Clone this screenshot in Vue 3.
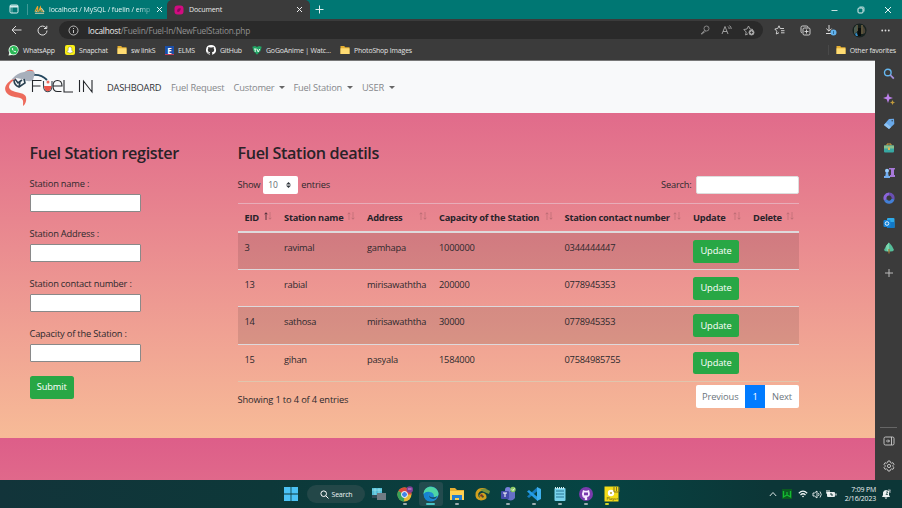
<script setup>
const bookmarks = [
  { name: 'WhatsApp', icon: 'whatsapp', w: 57 },
  { name: 'Snapchat', icon: 'snapchat', w: 52 },
  { name: 'sw linkS', icon: 'folder', w: 48 },
  { name: 'ELMS', icon: 'elms', w: 41 },
  { name: 'GitHub', icon: 'github', w: 46 },
  { name: 'GoGoAnime | Watc...', icon: 'gogo', w: 88 },
  { name: 'PhotoShop Images', icon: 'folder', w: 90 }
]
const nav = [
  { name: 'DASHBOARD', w: 64, active: true },
  { name: 'Fuel Request', w: 62.5 },
  { name: 'Customer', w: 60, drop: true },
  { name: 'Fuel Station', w: 68.5, drop: true },
  { name: 'USER', w: 40, drop: true }
]
const fields = ['Station name :', 'Station Address :', 'Station contact number :', 'Capacity of the Station :']
const headers = ['EID', 'Station name', 'Address', 'Capacity of the Station', 'Station contact number', 'Update', 'Delete']
const rows = [
  ['3', 'ravimal', 'gamhapa', '1000000', '0344444447'],
  ['13', 'rabial', 'mirisawaththa', '200000', '0778945353'],
  ['14', 'sathosa', 'mirisawaththa', '30000', '0778945353'],
  ['15', 'gihan', 'pasyala', '1584000', '07584985755']
]
</script>

<template>
  <div class="screen">
    <header class="tabs">
      <div class="tab-menu">
        <svg width="10" height="10" viewBox="0 0 10 10" fill="none" stroke="#d9eeee"><rect x="1" y="1" width="8" height="8" rx="1.2" /><path d="M1 2.5h8" stroke-width="2" /><path d="M3 3v6" stroke-width=".5" /></svg>
      </div>
      <div class="tab back-tab">
        <svg width="11" height="10" viewBox="0 0 12 10"><path d="M1 7L4 1v6M5 7l2-5 1 5M9 6l2 1" stroke="#f0a52d" stroke-width="1.2" fill="none" /><path d="M1 8.5h10M2 6l1 1M8 3l3 4" stroke="#d8d0ad" stroke-width="1.1" /></svg>
        <span class="tab-title">localhost / MySQL / fuelin / emp</span>
        <svg class="close" width="7" height="7" viewBox="0 0 7 7" stroke="#e3f2f2"><path d="M1 1l5 5M6 1L1 6" /></svg>
      </div>
      <div class="tab front-tab">
        <svg width="10" height="10" viewBox="0 0 10 10"><rect x=".5" y=".5" width="9" height="9" rx="3" fill="#d20c80" /><path d="M3 6.5c0-3 2-4 4-3-1 3-2 4-4 3z" fill="#8d075d" /></svg>
        <span class="tab-title doc">Document</span>
        <svg class="close" width="7" height="7" viewBox="0 0 7 7" stroke="#eee"><path d="M1 1l5 5M6 1L1 6" /></svg>
      </div>
      <svg class="plus" width="9" height="9" viewBox="0 0 9 9" stroke="#dceeee"><path d="M4.500 .5v8M.5 4.500h8" /></svg>
      <div class="window-buttons">
        <svg width="7" height="8" viewBox="0 0 7 8" stroke="#c8e2e1"><path d="M.5 4.500h6" /></svg>
        <svg width="8" height="8" viewBox="0 0 8 8" stroke="#e3f2f2" fill="none"><rect x="1" y="2" width="5" height="5" rx="1" /><path d="M2.500 1H6q1 0 1 1v3.500" stroke-width=".8" /></svg>
        <svg width="8" height="8" viewBox="0 0 8 8" stroke="#e8f5f5"><path d="M1 1l6 6M7 1L1 7" /></svg>
      </div>
    </header>

    <div class="toolbar">
      <svg class="back" width="11" height="10" viewBox="0 0 11 10" fill="none" stroke="#ddd"><path d="M10.500 5H1M5 1L1 5l4 4" /></svg>
      <svg class="reload" width="11" height="11" viewBox="0 0 11 11" fill="none" stroke="#ddd"><path d="M9.200 3A4.500 4.500 0 1 0 10 5.500M9.800 .8v2.700H7" /></svg>
      <div class="address">
        <svg width="11" height="11" viewBox="0 0 11 11" fill="none" stroke="#c4c4c4"><circle cx="5.500" cy="5.500" r="4.500" stroke-width=".9" /><path d="M5.500 5v3M5.500 3v1" /></svg>
        <span class="url"><b>localhost</b>/Fuelin/Fuel-In/NewFuelStation.php</span>
        <div class="address-icons">
          <svg width="10" height="10" viewBox="0 0 10 10" fill="none" stroke="#8d8d8d" stroke-width=".9"><circle cx="6.500" cy="3.500" r="2.500" /><path d="M4.700 5.200L1 9l2-.4V7.500h1.200L5.500 6M7 3h.3" /></svg>
          <svg width="11" height="10" viewBox="0 0 11 10" fill="none" stroke="#a8a8a8" stroke-width=".9"><path d="M1 9l3-7.500L7 9M2 6.500h4M7 1.500q1.300 1 1.200 2.500M8.500 .5q1.800 1.500 1.700 3.500" /></svg>
          <svg width="12" height="11" viewBox="0 0 12 11" fill="none" stroke="#aaa" stroke-width=".9"><path d="M10 4.500L7 4 5.500 1 4 4 .8 4.500 3.200 7 2.600 10 5 8.800" /><circle cx="8.500" cy="7.500" r="2.500" fill="#aaa" /><path d="M7.200 7.500h2.600M8.500 6.200v2.600" stroke="#333" /></svg>
        </div>
      </div>
      <div class="tool-icons">
        <svg width="11" height="10" viewBox="0 0 11 10" fill="none" stroke="#ddd" stroke-width=".9"><path d="M10 3.500H6.200L5 .8 3.700 3.500 .8 4l2 2.200L2.300 9 5 7.700M7 5.700h3.500M7 7.800h3.500" /></svg>
        <svg width="11" height="11" viewBox="0 0 11 11" fill="none" stroke="#ddd" stroke-width=".9"><rect x="3" y="3" width="7" height="7" rx="1.300" /><path d="M6.500 4.500v4M4.500 6.500h4M2 8Q1 7.500 1 6.500V2.500Q1 1 2.500 1h4Q8 1 8 2.500" /></svg>
        <svg width="12" height="12" viewBox="0 0 12 12" fill="none" stroke="#ddd"><path d="M4 1v6M1.300 4.600L4 7.200l2.600-2.600M1 9.500h5" /><circle cx="8.500" cy="8.500" r="3" fill="#62b2ed" stroke="none" /><path d="M8.500 7v3" stroke="#326f9b" /></svg>
        <svg class="avatar" width="15" height="15" viewBox="0 0 15 15"><circle cx="7.500" cy="7.500" r="7" fill="#17221f" /><path d="M5 2v6M10 2v9" stroke="#c3a064" stroke-width=".8" /><path d="M2 5q2-3 3-3v7l-3 2z" fill="#4c5b50" /><path d="M3 11l1.500-1.500L6 13H4z" fill="#318bc7" /><path d="M6 5h3v8H6z" fill="#090c0b" /><path d="M11 3q3 3 2 7l-2 1z" fill="#4a4438" /></svg>
        <svg width="9" height="3" viewBox="0 0 9 3" fill="#ddd"><circle cx="1.200" cy="1.500" r=".9" /><circle cx="4.500" cy="1.500" r=".9" /><circle cx="7.800" cy="1.500" r=".9" /></svg>
      </div>
    </div>

    <div class="bookmarks">
      <div v-for="b in bookmarks" :key="b.name" class="bookmark" :style="{ width: b.w + 'px' }">
        <svg v-if="b.icon === 'whatsapp'" width="11" height="11" viewBox="0 0 11 11"><path d="M.5 10.500l.8-2.800A5 5 0 1 1 4 9.900z" fill="#eafff0" /><circle cx="5.700" cy="5.200" r="4.200" fill="#2bb957" /><path d="M4 3q-.8 1 1 2.800T8 7l-.3-1-1-.3-.6.500-1.200-1.200.4-.7-.4-1z" fill="#fff" /></svg>
        <svg v-else-if="b.icon === 'snapchat'" width="10" height="10" viewBox="0 0 10 10"><rect width="10" height="10" rx="2" fill="#f9ef16" /><path d="M3.200 3.500a1.800 1.800 0 0 1 3.600 0v1.700L8.300 7l-1.500.5L5 8.300l-1.800-.8L1.700 7l1.500-1.800z" fill="#fff" stroke="#706b1f" stroke-width=".4" /></svg>
        <svg v-else-if="b.icon === 'folder'" width="10" height="10" viewBox="0 0 10 10"><path d="M.5 1h3.700l1 1.200h4.300V9h-9z" fill="#e4ae31" /><path d="M.5 3.300h9V9h-9z" fill="#ffdc73" /></svg>
        <span v-else-if="b.icon === 'elms'" class="elms-icon">E</span>
        <svg v-else-if="b.icon === 'github'" width="10" height="10" viewBox="0 0 16 16" fill="#fff"><path d="M8 0a8 8 0 0 0-2.530 15.590c.4.070.55-.17.55-.38v-1.490c-2.230.48-2.700-.94-2.700-.94-.36-.92-.89-1.170-.89-1.170-.73-.5.050-.49.050-.49.800.06 1.230.83 1.230.83.710 1.230 1.870.87 2.330.67.070-.52.280-.87.500-1.070-1.780-.2-3.640-.89-3.640-3.950 0-.87.310-1.590.82-2.150-.08-.2-.36-1.020.08-2.120 0 0 .67-.21 2.200.82a7.700 7.700 0 0 1 4 0c1.530-1.040 2.200-.82 2.200-.82.440 1.100.16 1.920.08 2.120.51.560.82 1.270.82 2.150 0 3.070-1.870 3.750-3.650 3.950.29.250.54.730.54 1.480v2.200c0 .21.150.46.550.38A8 8 0 0 0 8 0z" /></svg>
        <svg v-else width="10" height="9" viewBox="0 0 10 9"><path d="M.3.7L3 0l2 1 2-1 2.700.7L8.500 5 5 8.800 1.500 5z" fill="#22a565" /><path d="M2 3h2.500M3.200 3v3M5 3l1.200 3 1.500-3" stroke="#dff8eb" fill="none" /></svg>
        <span>{{ b.name }}</span>
      </div>
      <div class="bookmark other">
        <svg width="10" height="10" viewBox="0 0 10 10"><path d="M.5 1h3.700l1 1.200h4.300V9h-9z" fill="#e4ae31" /><path d="M.5 3.300h9V9h-9z" fill="#ffdc73" /></svg>
        <span>Other favorites</span>
      </div>
    </div>

    <div class="viewport">
      <main class="page">
        <nav class="navbar">
          <svg class="logo" width="90" height="40" viewBox="0 0 90 40" fill="none">
            <path d="M11 11C4 14-1 20 2 25c2 4 9 5 14 6 4 1 3 4 3 8q4-3 3-9c-1-4-8-4-13-6-7-3-4-8 3-12z" fill="#ed6b5c" />
            <path d="M29 8q8-1 14 5" stroke="#25475e" stroke-width="1.800" />
            <path d="M21 5q4-4 9-1l-4 4z" fill="#ed6b5c" />
            <path d="M8 12Q13 6 20 5q8-3 11 1l-2 7q-4 3-11-1l-6-1-3 2z" fill="#a7afbb" />
            <path d="M10 13q0 5 5 7l6-4-1-4M15 20l1-5M11 12l3 4 4-3" stroke="#294050" stroke-width="1.600" />
            <path d="M28.500 25V13.500h9M28.500 19h8M60 13v12h9M75.500 13v12M79.500 25V14l8.500 11V13" stroke="#24272b" stroke-width="1.100" />
            <path d="M49 19h9q0-5.500-4.500-5.500T49 19q0 5.500 4.500 5.500h4" stroke="#24272b" stroke-width="1.100" />
            <path d="M39.500 14v4c0 9 8.500 9 8.500 0v-4" stroke="#35424d" stroke-width="1.100" />
            <path d="M40 19h7.500c0 7-7.500 7-7.500 0z" fill="#ed5549" /><circle cx="44" cy="15" r="1.500" fill="#ed6b5c" />
          </svg>
          <div v-for="n in nav" :key="n.name" class="nav-item" :class="{ active: n.active }" :style="{ width: n.w + 'px' }">
            <span>{{ n.name }}</span><i v-if="n.drop" class="caret" />
          </div>
        </nav>
        <div class="content">
          <form class="register" @submit.prevent>
            <h3>Fuel Station register</h3>
            <label v-for="f in fields" :key="f">{{ f }}<input type="text"></label>
            <button class="btn">Submit</button>
          </form>
          <section class="details">
            <h3>Fuel Station deatils</h3>
            <div class="controls">
              <div class="length">
                <span>Show</span>
                <div class="select">10<svg width="5" height="6" viewBox="0 0 5 6" fill="#343a40"><path d="M0 2.500L2.500 0 5 2.500zM0 3.500h5L2.500 6z" /></svg></div>
                <span class="entries">entries</span>
              </div>
              <label class="search">Search:<input type="text"></label>
            </div>
            <div class="table">
              <div class="tr head">
                <div v-for="(h, i) in headers" :key="h" class="th">
                  <span>{{ h }}</span>
                  <svg class="sort" width="8" height="8" viewBox="0 0 8 8" fill="none" stroke="#32202a" stroke-width=".8"><path :class="{ on: i === 0 }" d="M2 8V.8M.5 2.300L2 .8l1.500 1.500" /><path d="M6 0v7.200M4.500 5.700L6 7.200l1.500-1.500" /></svg>
                </div>
              </div>
              <div v-for="r in rows" :key="r[0]" class="tr">
                <div v-for="(c, i) in r" :key="i" class="td">{{ c }}</div>
                <div class="td"><button class="btn">Update</button></div>
                <div class="td" />
              </div>
            </div>
            <div class="footer">
              <span class="info">Showing 1 to 4 of 4 entries</span>
              <div class="pager"><span class="prev">Previous</span><span class="current">1</span><span class="next">Next</span></div>
            </div>
          </section>
        </div>
      </main>
      <aside class="sidebar">
        <svg viewBox="0 0 12 12" fill="none"><circle cx="4.800" cy="4.500" r="3.300" stroke="#65b7ef" stroke-width="1.400" /><path d="M7.300 7l3.500 3.700" stroke="#a590db" stroke-width="1.800" /></svg>
        <svg viewBox="0 0 12 12"><path d="M5 0l1.300 3.700L10 5 6.300 6.300 5 10 3.700 6.300 0 5l3.700-1.300z" fill="#bd80ec" /><path d="M9.500 7l.8 1.700 1.700.8-1.700.8-.8 1.700-.8-1.700-1.700-.8 1.700-.8z" fill="#c19a3b" /></svg>
        <svg viewBox="0 0 12 12"><path d="M6 1l5-.3L11.300 6 6 11 .8 7z" fill="#69a9e9" /><path d="M1 7l5 4 2-2-5-4z" fill="#91c3f1" /><circle cx="9.200" cy="2.700" r=".8" fill="#3b4856" /></svg>
        <svg viewBox="0 0 12 12"><path d="M4 3.500V2h4v1.500" fill="none" stroke="#d2a342" /><rect x="1" y="3.500" width="10" height="7" rx="1" fill="#38a8a3" /><path d="M1 3.500h10v3H1z" fill="#88c08e" /><path d="M5 5.500h2V8H5z" fill="#e2b857" /></svg>
        <svg viewBox="0 0 12 12"><path d="M6 1h6v1.500h-1V8h1v2H7V8h1V2.500H6z" fill="#a879d9" /><circle cx="4" cy="3.700" r="2" fill="#9acfff" /><path d="M3 5h2l.7 4H7v2H1V9h1.300z" fill="#74aff0" /></svg>
        <svg viewBox="0 0 12 12" fill="none" stroke-width="3"><path d="M6 2a4 4 0 0 0-3.500 6" stroke="#8b65db" /><path d="M2.500 8A4 4 0 0 0 10 7" stroke="#437fd6" /><path d="M6 2a4 4 0 0 1 4 5" stroke="#6a4fb4" /></svg>
        <svg viewBox="0 0 12 12"><rect x="4" y="1" width="7.500" height="10" rx="1" fill="#2eabea" /><path d="M4 5h7.500v6H4z" fill="#1178c6" /><rect x=".5" y="3" width="7" height="7" rx="1" fill="#1683d8" /><circle cx="4" cy="6.500" r="1.800" fill="none" stroke="#e1f2ff" /></svg>
        <svg viewBox="0 0 12 12"><path d="M6 .5L9 4l2 4q-1 2-5 1.500Q2 10 1 8l2-4z" fill="#55bd99" /><path d="M6 .5L3 4l1 5 2 .5z" fill="#7bd7ae" /><path d="M6 7v4.500" stroke="#a37a3c" stroke-width="1.300" /></svg>
        <svg class="add" viewBox="0 0 12 12" stroke="#bbb"><path d="M6 2v8M2 6h8" /></svg>
        <div class="side-bottom">
          <hr>
          <svg viewBox="0 0 12 12" fill="none" stroke="#ccc" stroke-width=".9"><rect x="1" y="2" width="10" height="8" rx="1.500" /><path d="M8.500 2v8M3 6h3.500M5 4.500L6.500 6 5 7.500" /></svg>
          <svg viewBox="0 0 12 12" fill="none" stroke="#ccc" stroke-width=".9"><path d="M5 1h2l.4 1.500 1.200.7L10 2.700l1 1.700L9.900 5.500v1L11 7.600l-1 1.700-1.400-.4-1.200.7L7 11H5l-.4-1.400-1.200-.7-1.400.4-1-1.700 1.100-1.100v-1L1 4.400l1-1.700 1.400.5 1.200-.7z" /><circle cx="6" cy="6" r="1.600" /></svg>
        </div>
      </aside>
    </div>

    <footer class="taskbar">
      <svg class="start" width="14" height="14" viewBox="0 0 14 14" fill="#4cc2f5"><path d="M0 0h6.600v6.600H0zM7.400 0H14v6.600H7.400zM0 7.400h6.600V14H0zM7.400 7.400H14V14H7.400z" /></svg>
      <div class="task-search"><svg width="9" height="9" viewBox="0 0 9 9" fill="none" stroke="#fff"><circle cx="3.700" cy="3.700" r="2.800" /><path d="M5.800 5.800l2.700 2.700" /></svg>Search</div>
      <div class="apps">
        <div class="app"><svg viewBox="0 0 16 16"><rect x="1" y="2" width="10" height="7" fill="#55bfd8" /><path d="M1 4h10M4 2v7M8 2v7" stroke="#a4e7ef" stroke-width=".7" /><rect x="6" y="7" width="9" height="7" fill="#717b83" /><path d="M1 9h5v3H1z" fill="#344d59" /></svg></div>
        <div class="app run"><svg viewBox="0 0 16 16"><circle cx="7.500" cy="8.500" r="7" fill="#e6b936" /><path d="M7.500 8.500L1.500 5A7 7 0 0 1 14.500 8.500z" fill="#dd4b3c" /><path d="M7.500 8.500L1.400 5A7 7 0 0 0 7 15.500z" fill="#38a35a" /><circle cx="7.500" cy="8.500" r="3" fill="#4485e8" stroke="#fff" /><circle cx="12.800" cy="3.500" r="3.200" fill="#7f3e94" /><path d="M11 3h3.500" stroke="#d49ade" /></svg></div>
        <div class="app run selected"><svg viewBox="0 0 16 16"><circle cx="8" cy="8" r="7.500" fill="#208bd3" /><path d="M.5 8C1 1 7-.5 11 1.500q4.500 2.500 4.500 6.500 0 3-4.500 3 0-5-5-5-4 0-5.500 2z" fill="#4ed6a4" /><path d="M1 8q2-3 6-2-3 2-1 6 3 4 6 1-5 4-9 1-2-2-2-6z" fill="#1683d1" /><path d="M7 7q-2 3 1 4 4 1 6-1-1 3-4 3-6-1-3-6z" fill="#154d68" /></svg></div>
        <div class="app run"><svg viewBox="0 0 16 16"><path d="M1 2h5l2 2h7v10H1z" fill="#e7ae32" /><path d="M1 5h14v9H1z" fill="#ffd052" /><path d="M3 9h10v5H3z" fill="#267ed1" /><path d="M6 12h4v2H6z" fill="#ffd052" /></svg></div>
        <div class="app"><svg viewBox="0 0 16 16" fill="none"><path d="M11 4q-7-2-9 3-1 6 4 6 5 0 4-3-1-3-4-1-1 1 1 2" stroke="#d2a01e" stroke-width="2.800" /><path d="M5 4q4-3 10 1l-1 3-5-2z" fill="#79933b" /><circle cx="6.500" cy="9.500" r="1.300" fill="#7b2c25" /></svg></div>
        <div class="app run"><svg viewBox="0 0 16 16"><circle cx="8" cy="4" r="3" fill="#7680da" /><path d="M6 6h9v6q-4 5-9 0z" fill="#6670c6" /><rect x="1" y="5" width="8" height="8" rx="1" fill="#454cab" /><path d="M3 7h4M5 7v4" stroke="#fff" /><circle cx="13" cy="3.500" r="2.700" fill="#8ccb63" /><path d="M12 3.500l1 1 1.500-2" stroke="#fff" fill="none" /></svg></div>
        <div class="app run"><svg viewBox="0 0 16 16"><path d="M11.500 1v4L3 12l-2-1.500z" fill="#147bbd" /><path d="M1 5.500L3 4l8.500 7v4z" fill="#249ce4" /><path d="M11 1l4 2v10l-4 2z" fill="#3eb0ed" /></svg></div>
        <div class="app run"><svg viewBox="0 0 16 16"><rect x="2.500" y="2" width="11" height="13" rx="1" fill="#78d3ec" /><path d="M4 5h8M4 8h8M4 11h8" stroke="#297795" /><path d="M3 2h10" stroke="#d2edf0" stroke-width="2" stroke-dasharray="1 1" /></svg></div>
        <div class="app run"><svg viewBox="0 0 16 16"><circle cx="8" cy="8" r="7" fill="#7a3bad" /><path d="M5 4l2 .8h2L11 4l.6 2.300q1 4-2.400 4.700V14H6.800v-2Q5 12 4 10l2 .8q-3-1-1.600-4.500z" fill="#f6eaff" /><path d="M6 6.500h4v2.800H6z" fill="#7a3bad" /></svg></div>
        <div class="app run player"><svg viewBox="0 0 16 16"><rect x=".5" y=".5" width="14" height="15" fill="#f4dc19" /><circle cx="7" cy="7" r="3.200" fill="#fff" /><path d="M10 1v5h5V1M12.500 1v4" stroke="#867522" fill="none" /><circle cx="7" cy="7" r="1" fill="#b5a02c" /><text x="2.500" y="14" font-size="4" fill="#373217">Player</text></svg></div>
      </div>
      <div class="tray">
        <svg width="8" height="6" viewBox="0 0 8 6" fill="none" stroke="#d8e3e3"><path d="M.8 5L4 1.500 7.200 5" /></svg>
        <svg class="green" width="10" height="10" viewBox="0 0 10 10"><rect width="10" height="10" fill="#0b5b20" /><path d="M1.500 2v6L5 6l3.500 2V2M5 3v3" fill="none" stroke="#15bb34" stroke-width="1.300" /></svg>
        <svg class="wifi" width="10" height="8" viewBox="0 0 10 8" fill="none" stroke="#edf3f3" stroke-width="1.200"><path d="M.8 3.200Q5-.8 9.200 3.200M2.500 5Q5 2.500 7.500 5" /><circle cx="5" cy="6.500" r=".8" fill="#fff" stroke="none" /></svg>
        <svg class="sound" width="10" height="9" viewBox="0 0 10 9" fill="none" stroke="#edf3f3" stroke-width=".9"><path d="M1 3h1.500L5 1v7L2.500 6H1zM6.500 3q1 1.500 0 3M8 1.500q2.500 3 0 6" /></svg>
        <svg class="battery" width="11" height="8" viewBox="0 0 11 8"><rect x="1" y="2" width="8" height="5" rx="1" fill="#e6ecec" /><path d="M10 3.500v2M1 0v3M3 0v3M0 3h4" stroke="#fff" /><path d="M5 3v2h2" stroke="#163b3b" fill="none" /></svg>
        <div class="clock"><span>7:09 PM</span><span>2/16/2023</span></div>
        <svg class="bell" width="10" height="10" viewBox="0 0 10 10"><path d="M1 8l1-2V3.500Q2.500 1 5 1l3 1v4l1 2zM3.500 8.500h3L5 10z" fill="#edf2f2" /><path d="M5 3h2L5 5.500h2" stroke="#123b3a" fill="none" stroke-width=".7" /><path d="M7 1h2.500L7.500 3H10" stroke="#fff" fill="none" stroke-width=".6" /></svg>
      </div>
    </footer>
  </div>
</template>

<style>
body { margin: 0; overflow: hidden; }
</style>

<style scoped>
* { box-sizing: border-box; }
svg { display: block; flex: none; }
.screen { width: 902px; height: 508px; display: flex; flex-direction: column; font-family: "Open Sans", "Noto Sans", sans-serif; background: #3b3b3b; }
.tabs { height: 19px; flex: none; background: #007773; display: flex; align-items: center; color: #e4f4f4; }
.tab-menu { width: 28px; padding-left: 9px; border-right: 1px solid #409a97; height: 11px; }
.tab { height: 19px; display: flex; align-items: center; gap: 5px; font-size: 7px; white-space: nowrap; }
.back-tab { width: 139px; padding: 0 4px 0 6px; gap: 4px; }
.back-tab .tab-title { letter-spacing: -.08px; mask-image: linear-gradient(to right, #000 88%, rgba(0, 0, 0, .35)); }
.close { margin-left: auto; }
.front-tab { width: 143px; padding: 0 7px; background: #3b3b3b; border-radius: 5px 5px 0 0; color: #e8e8e8; }
.doc { letter-spacing: -.13px; }
.plus { margin-left: 5px; }
.window-buttons { margin-left: auto; display: flex; gap: 19px; padding-right: 10px; }
.toolbar { height: 21px; flex: none; display: flex; align-items: center; background: #3b3b3b; padding: 1px 12px 0 11px; }
.reload { margin-left: 15px; }
.address { margin-left: 11px; width: 704px; height: 18px; border-radius: 9px; background: #2a2a2a; display: flex; align-items: center; padding: 0 8px 0 9px; }
.url { color: #929292; font-size: 8.300px; margin-left: 9px; letter-spacing: -.22px; }
.url b { color: #eee; font-weight: 400; }
.address-icons { margin-left: auto; display: flex; align-items: center; gap: 11px; }
.tool-icons { flex: 1; margin-left: 11px; display: flex; align-items: center; justify-content: space-between; }
.bookmarks { height: 20px; flex: none; display: flex; align-items: center; padding: 0 6px 0 8px; font-size: 6.950px; color: #e3e3e3; white-space: nowrap; letter-spacing: -.17px; }
.bookmark { display: flex; align-items: center; gap: 4px; flex: none; }
.other { margin-left: auto; padding-left: 7px; border-left: 1px solid #494949; }
.elms-icon { width: 9px; height: 9px; background: #1b4fa8; color: #fff; font: 700 8px/9px "Open Sans", sans-serif; text-align: center; border-bottom: 1px solid #bd3c59; }
.viewport { height: 420px; flex: none; display: flex; }
.page { width: 875px; background: linear-gradient(#dd5e89, #f7bb97) 0 0 / 100% 378px repeat-y; color: #2d292d; font-size: 9.300px; letter-spacing: -.2px; }
.navbar { height: 53px; background: #f8f9fa; border-top: 1px solid #777; display: flex; align-items: center; padding-left: 4px; }
.logo { margin-right: 13px; margin-top: -1px; }
.nav-item { color: #85878a; display: flex; align-items: center; white-space: nowrap; }
.nav-item.active { color: #303235; }
.caret { border: 3px solid transparent; border-top-color: #666; border-bottom: 0; margin-left: 5px; }
.content { display: flex; padding: 27.500px 0 0 29.500px; }
.register { width: 208px; display: flex; flex-direction: column; align-items: flex-start; }
h3 { margin: 0; font-size: 16.200px; line-height: 24px; font-weight: 600; color: #2a2228; letter-spacing: -.38px; white-space: nowrap; }
.register label { display: flex; flex-direction: column; height: 50px; line-height: 14px; white-space: nowrap; }
.register h3 + label { margin-top: 12px; }
.register input { width: 111px; height: 18px; margin-top: 3.700px; padding: 0; border: 1px solid #898989; background: #fff; border-radius: 1px; }
.btn { border: 0; border-radius: 2.500px; background: #28a745; color: #fff; font: 9.300px/22px "Open Sans", sans-serif; letter-spacing: -.12px; padding: 0; width: 46px; height: 22.500px; display: block; }
.register .btn { width: 44.500px; margin-top: -.5px; }
.details { width: 561.500px; }
.controls { display: flex; justify-content: space-between; align-items: center; height: 19px; margin-top: 10.500px; }
.length { display: flex; align-items: center; gap: 3px; }
.select { width: 35px; height: 18px; background: #fff; border-radius: 2px; display: flex; align-items: center; justify-content: space-between; padding: 0 7px 0 5px; font-size: 8.500px; color: #656b71; }
.search { display: flex; align-items: center; gap: 4px; }
.search input { width: 103.500px; height: 18px; padding: 0; border: 1px solid #ddd; background: #fff; border-radius: 2px; }
.table { margin-top: 8.500px; border-bottom: 1px solid #e0c5ad; }
.tr { display: grid; grid-template-columns: 39.500px 83px 72px 125.500px 128.500px 60px 53px; height: 37.300px; border-top: 1px solid #ded9dc; }
.tr:nth-child(even) { background: rgba(0, 0, 0, .1); }
.tr.head { height: 28.500px; border-top-color: #e8adb9; }
.tr:nth-child(2) { border-top-width: 2px; height: 38px; }
.th { display: flex; align-items: center; justify-content: space-between; padding: 0 5px 0 7px; font-weight: 700; white-space: nowrap; letter-spacing: -.24px; color: #27232a; }
.sort { margin-top: -2px; }
.sort path { opacity: .22; }
.sort path.on { opacity: 1; }
.td { padding: 7px 7px 0; line-height: 15px; letter-spacing: -.24px; white-space: nowrap; }
.footer { display: flex; justify-content: space-between; margin-top: 3.500px; }
.info { padding-top: 8px; letter-spacing: -.15px; }
.pager { display: flex; height: 22.500px; background: #fff; border-radius: 2px; overflow: hidden; line-height: 23px; text-align: center; color: #6c757d; letter-spacing: -.1px; }
.prev { width: 49.500px; }
.current { width: 20px; background: #007bff; color: #fff; }
.next { width: 34px; }
.sidebar { width: 27px; background: #3b3b3b; display: flex; flex-direction: column; align-items: center; padding-top: 8px; gap: 12.800px; }
.sidebar svg { width: 12px; height: 12px; }
.sidebar .add { margin-top: 1px; }
.side-bottom { margin-top: auto; display: flex; flex-direction: column; align-items: center; gap: 13px; padding-bottom: 8px; }
.side-bottom hr { width: 17px; margin: 0 0 -6px; border: 0; border-top: 1px solid #666; }
.taskbar { height: 28px; background: linear-gradient(90deg, #12343a, #0d3839 30%, #064443 65%, #0c3637 85%); display: flex; align-items: center; padding-left: 284px; color: #edf4f4; }
.task-search { width: 58px; height: 18px; border-radius: 9px; background: #234748; margin-left: 8.500px; padding-left: 13px; display: flex; align-items: center; gap: 3px; font-size: 7px; letter-spacing: -.2px; }
.apps { display: flex; margin-left: 2.500px; gap: 1.900px; }
.app { width: 24px; height: 24px; border-radius: 3px; display: flex; flex-direction: column; align-items: center; padding-top: 4px; }
.app svg { width: 16px; height: 16px; }
.run::after { content: ""; width: 4px; height: 1.500px; border-radius: 1px; background: #9baeb0; margin-top: 1px; }
.selected { background: #234b4e; }
.selected::after { width: 9px; background: #4ac5c5; }
.player::after { background: #d0d929; margin-right: 10px; }
.tray { margin-left: auto; display: flex; align-items: center; padding-right: 11px; }
.green { margin-left: 5px; }
.wifi { margin-left: 6px; }
.sound { margin-left: 4px; }
.battery { margin-left: 4px; }
.clock { width: 39px; display: flex; flex-direction: column; align-items: flex-end; font-size: 6.900px; line-height: 9px; white-space: nowrap; letter-spacing: -.15px; }
.bell { margin-left: 5px; }
</style>
